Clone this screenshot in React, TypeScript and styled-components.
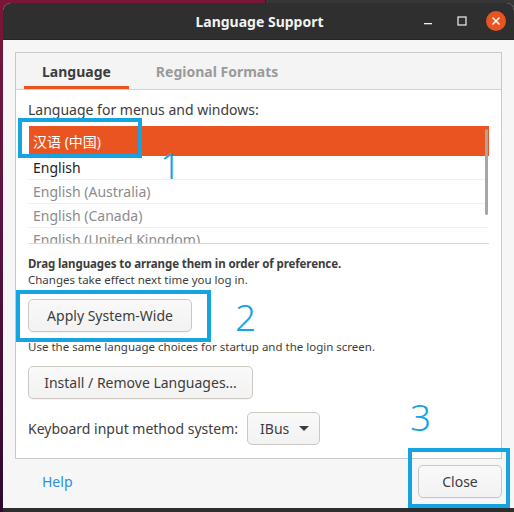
import React from "react";
import styled, { createGlobalStyle } from "styled-components";

const GlobalStyle = createGlobalStyle`
  html, body { margin: 0; padding: 0; }
  body {
    background: #2a2a2a;
    font-family: "Noto Sans", "Noto Sans CJK SC", sans-serif;
  }
  * { box-sizing: border-box; }
`;

const ANNOT = "#16a3e2";

const Desktop = styled.div`
  position: relative;
  width: 514px;
  height: 512px;
  overflow: hidden;
  padding: 3px 0 0 3px;
  background: linear-gradient(to bottom, #7a1636 0%, #5a1240 45%, #2c0b2e 100%);
`;

const BackWindow = styled.div`
  position: absolute;
  top: 0;
  left: 265px;
  width: 249px;
  height: 20px;
  background: #363636;
  border-left: 1px solid #222;
`;

const BottomStrip = styled.div`
  position: absolute;
  left: 3px;
  right: 0;
  bottom: 0;
  height: 4px;
  background: #2d2d2d;
`;

const Window = styled.div`
  position: relative;
  z-index: 1;
  width: 511px;
  height: 505px;
  background: #f6f6f6;
  border-radius: 8px 8px 0 0;
  display: flex;
  flex-direction: column;
  overflow: hidden;
`;

const TitleBar = styled.div`
  height: 37px;
  flex: none;
  background: #2f2f2f;
  border-bottom: 1px solid #262626;
  display: grid;
  grid-template-columns: 1fr auto 1fr;
  align-items: center;
  padding-right: 8px;
`;

const Title = styled.div`
  grid-column: 2;
  color: #f2f2f2;
  font-weight: 700;
  font-size: 14px;
  margin-left: 10px;
`;

const Controls = styled.div`
  grid-column: 3;
  justify-self: end;
  display: flex;
  align-items: center;
  gap: 14px;
`;

const CtlButton = styled.div<{ $close?: boolean }>`
  width: 20px;
  height: 20px;
  border-radius: 50%;
  display: flex;
  align-items: center;
  justify-content: center;
  background: ${(p) => (p.$close ? "#e95420" : "transparent")};
`;

const Body = styled.div`
  flex: 1;
  display: flex;
  flex-direction: column;
  padding: 12px 12px 0 12px;
`;

const Frame = styled.div`
  height: 407px;
  border: 1px solid #c9c9c9;
  display: flex;
  flex-direction: column;
  background: #ffffff;
`;

const TabHeader = styled.div`
  height: 37px;
  flex: none;
  background: #f4f4f4;
  border-bottom: 1px solid #d2d2d2;
  display: flex;
  padding-left: 8px;
`;

const Tab = styled.div<{ $active?: boolean }>`
  height: 100%;
  padding: 0 18px;
  display: flex;
  align-items: center;
  font-weight: 700;
  font-size: 14px;
  color: ${(p) => (p.$active ? "#3c3c3c" : "#9a9a9a")};
  border-bottom: 3px solid ${(p) => (p.$active ? "#e95420" : "transparent")};
  padding-top: 3px;
  ${(p) => (p.$active ? "" : "margin-left: 9px;")}
`;

const Content = styled.div`
  flex: 1;
  background: #ffffff;
  padding: 10px 12px 12px 12px;
  display: flex;
  flex-direction: column;
  align-items: flex-start;
`;

const Label = styled.div`
  font-size: 14px;
  line-height: 20px;
  color: #3d3d3d;
`;

const List = styled.div`
  position: relative;
  margin-top: 6px;
  margin-left: 1px;
  align-self: stretch;
  height: 118px;
  overflow: hidden;
  border-bottom: 1px solid #d9d9d9;
`;

const Row = styled.div<{ $selected?: boolean; $dim?: boolean }>`
  height: ${(p) => (p.$selected ? "30px" : "24px")};
  display: flex;
  align-items: center;
  padding-left: 4px;
  font-size: 14px;
  background: ${(p) => (p.$selected ? "#e95420" : "#ffffff")};
  color: ${(p) => (p.$selected ? "#ffffff" : p.$dim ? "#8c8c8c" : "#1c1c1c")};
  border-bottom: 1px solid ${(p) => (p.$selected ? "#e95420" : "#f0f0f0")};
`;

const ScrollThumb = styled.div`
  position: absolute;
  right: 1px;
  top: 3px;
  width: 3px;
  height: 86px;
  border-radius: 2px;
  background: #a6a6a6;
`;

const Hint = styled.div<{ $bold?: boolean; $mt?: number }>`
  font-size: 11.5px;
  line-height: 16px;
  color: #3d3d3d;
  margin-top: ${(p) => p.$mt ?? 0}px;
  font-weight: ${(p) => (p.$bold ? 700 : 400)};
  letter-spacing: ${(p) => (p.$bold ? "-0.1px" : "0")};
`;

const HintGroup = styled.div`
  margin-top: 12px;
  display: flex;
  flex-direction: column;
`;

const Button = styled.button<{ $w: number; $mt?: number }>`
  width: ${(p) => p.$w}px;
  height: 33px;
  margin-top: ${(p) => p.$mt ?? 0}px;
  border: 1px solid #cdc7c2;
  border-radius: 5px;
  background: linear-gradient(to bottom, #f9f9f9, #f2f2f2);
  box-shadow: 0 1px 0 rgba(0, 0, 0, 0.04);
  font-family: inherit;
  font-size: 14px;
  color: #3d3d3d;
  padding: 0;
`;

const KeyRow = styled.div`
  margin-top: 13px;
  display: flex;
  align-items: center;
  gap: 9px;
`;

const Combo = styled.div`
  width: 73px;
  height: 33px;
  border: 1px solid #cdc7c2;
  border-radius: 5px;
  background: linear-gradient(to bottom, #f9f9f9, #f2f2f2);
  display: flex;
  align-items: center;
  padding-left: 12px;
  gap: 10px;
  font-size: 14px;
  color: #3d3d3d;
`;

const Footer = styled.div`
  display: flex;
  justify-content: space-between;
  align-items: center;
  padding-top: 6px;
`;

const HelpLink = styled.div`
  margin-left: 27px;
  font-size: 14px;
  color: #2a92d6;
`;

const AnnotBox = styled.div`
  position: absolute;
  border: 4px solid ${ANNOT};
  z-index: 5;
`;

const AnnotNum = styled.div`
  position: absolute;
  z-index: 5;
  color: ${ANNOT};
  font-family: "Noto Sans", sans-serif;
  font-weight: 300;
  font-size: 37px;
  line-height: 1;
`;

const boxes = [
  { l: 18, t: 118, w: 124, h: 40 },
  { l: 16, t: 290, w: 195, h: 52 },
  { l: 408, t: 448, w: 102, h: 60 },
];

const nums = [
  { n: "1", l: 160, t: 146 },
  { n: "2", l: 235, t: 298 },
  { n: "3", l: 410, t: 398 },
];

const rows = [
  { text: "汉语 (中国)", selected: true },
  { text: "English" },
  { text: "English (Australia)", dim: true },
  { text: "English (Canada)", dim: true },
  { text: "English (United Kingdom)", dim: true },
];

export default function App() {
  return (
    <>
      <GlobalStyle />
      <Desktop>
        <BackWindow />
        <BottomStrip />
        <Window>
          <TitleBar>
            <Title>Language Support</Title>
            <Controls>
              <CtlButton>
                <svg width="10" height="10" viewBox="0 0 10 10">
                  <rect x="1" y="7" width="8" height="1.3" fill="#f0f0f0" />
                </svg>
              </CtlButton>
              <CtlButton>
                <svg width="10" height="10" viewBox="0 0 10 10">
                  <rect x="1" y="1" width="8" height="8" fill="none" stroke="#f0f0f0" strokeWidth="1.2" />
                </svg>
              </CtlButton>
              <CtlButton $close>
                <svg width="10" height="10" viewBox="0 0 10 10">
                  <path d="M1.5 1.5 L8.5 8.5 M8.5 1.5 L1.5 8.5" stroke="#ffffff" strokeWidth="1.5" />
                </svg>
              </CtlButton>
            </Controls>
          </TitleBar>
          <Body>
            <Frame>
              <TabHeader>
                <Tab $active>Language</Tab>
                <Tab>Regional Formats</Tab>
              </TabHeader>
              <Content>
                <Label>Language for menus and windows:</Label>
                <List>
                  {rows.map((r) => (
                    <Row key={r.text} $selected={r.selected} $dim={r.dim}>
                      {r.text}
                    </Row>
                  ))}
                  <ScrollThumb />
                </List>
                <HintGroup>
                  <Hint $bold>Drag languages to arrange them in order of preference.</Hint>
                  <Hint>Changes take effect next time you log in.</Hint>
                </HintGroup>
                <Button $w={164} $mt={11}>Apply System-Wide</Button>
                <Hint $mt={7}>Use the same language choices for startup and the login screen.</Hint>
                <Button $w={225} $mt={11}>Install / Remove Languages...</Button>
                <KeyRow>
                  <Label>Keyboard input method system:</Label>
                  <Combo>
                    IBus
                    <svg width="10" height="6" viewBox="0 0 10 6">
                      <path d="M0 0 L10 0 L5 5 Z" fill="#3d3d3d" />
                    </svg>
                  </Combo>
                </KeyRow>
              </Content>
            </Frame>
            <Footer>
              <HelpLink>Help</HelpLink>
              <Button $w={84}>Close</Button>
            </Footer>
          </Body>
        </Window>
        {boxes.map((b, i) => (
          <AnnotBox key={i} style={{ left: b.l, top: b.t, width: b.w, height: b.h }} />
        ))}
        {nums.map((n) => (
          <AnnotNum key={n.n} style={{ left: n.l, top: n.t }}>
            {n.n}
          </AnnotNum>
        ))}
      </Desktop>
    </>
  );
}
